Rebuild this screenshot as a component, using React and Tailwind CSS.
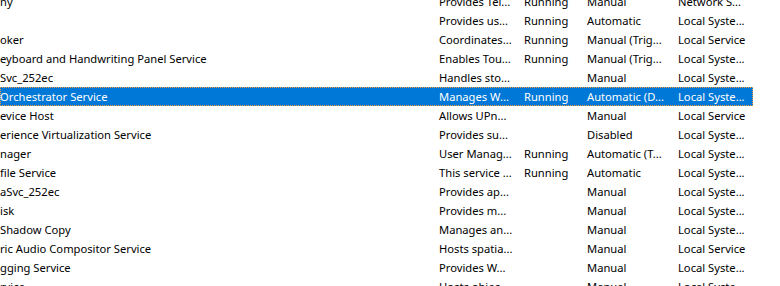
const rows = [
  { name: 'ny', desc: 'Provides Tel...', status: 'Running', startup: 'Manual', logon: 'Network S...' },
  { name: '', desc: 'Provides us...', status: 'Running', startup: 'Automatic', logon: 'Local Syste...' },
  { name: 'oker', desc: 'Coordinates...', status: 'Running', startup: 'Manual (Trig...', logon: 'Local Service' },
  { name: 'eyboard and Handwriting Panel Service', desc: 'Enables Tou...', status: 'Running', startup: 'Manual (Trig...', logon: 'Local Syste...' },
  { name: 'Svc_252ec', desc: 'Handles sto...', status: '', startup: 'Manual', logon: 'Local Syste...' },
  { name: 'Orchestrator Service', desc: 'Manages W...', status: 'Running', startup: 'Automatic (D...', logon: 'Local Syste...', selected: true },
  { name: 'evice Host', desc: 'Allows UPn...', status: '', startup: 'Manual', logon: 'Local Service' },
  { name: 'erience Virtualization Service', desc: 'Provides su...', status: '', startup: 'Disabled', logon: 'Local Syste...' },
  { name: 'nager', desc: 'User Manag...', status: 'Running', startup: 'Automatic (T...', logon: 'Local Syste...' },
  { name: 'file Service', desc: 'This service ...', status: 'Running', startup: 'Automatic', logon: 'Local Syste...' },
  { name: 'aSvc_252ec', desc: 'Provides ap...', status: '', startup: 'Manual', logon: 'Local Syste...' },
  { name: 'isk', desc: 'Provides m...', status: '', startup: 'Manual', logon: 'Local Syste...' },
  { name: 'Shadow Copy', desc: 'Manages an...', status: '', startup: 'Manual', logon: 'Local Syste...' },
  { name: 'ric Audio Compositor Service', desc: 'Hosts spatia...', status: '', startup: 'Manual', logon: 'Local Service' },
  { name: 'gging Service', desc: 'Provides W...', status: '', startup: 'Manual', logon: 'Local Syste...' },
  { name: 'rvice', desc: 'Hosts objec...', status: '', startup: 'Manual', logon: 'Local Syste...' },
];

function Row({ row }) {
  const base = row.selected
    ? 'bg-[#0078d7] text-white border border-dotted border-[#f39a3c]'
    : 'text-black border border-transparent';
  return (
    <div className={`flex h-[19px] w-[753px] items-center whitespace-nowrap pt-[2px] ${base}`}>
      <div className="w-[433px] -ml-px overflow-hidden">{row.name}</div>
      <div className="w-[85px] pl-[6px]">{row.desc}</div>
      <div className="w-[63px] pl-[6px]">{row.status}</div>
      <div className="w-[91px] pl-[6px]">{row.startup}</div>
      <div className="w-[80px] pl-[6px]">{row.logon}</div>
    </div>
  );
}

export default function App() {
  return (
    <div className="h-[286px] w-[780px] overflow-hidden bg-white font-['Segoe_UI','Noto_Sans',sans-serif] text-[11.2px]">
      <div className="-mt-2 flex flex-col">
        {rows.map((row, i) => (
          <Row key={i} row={row} />
        ))}
      </div>
    </div>
  );
}
